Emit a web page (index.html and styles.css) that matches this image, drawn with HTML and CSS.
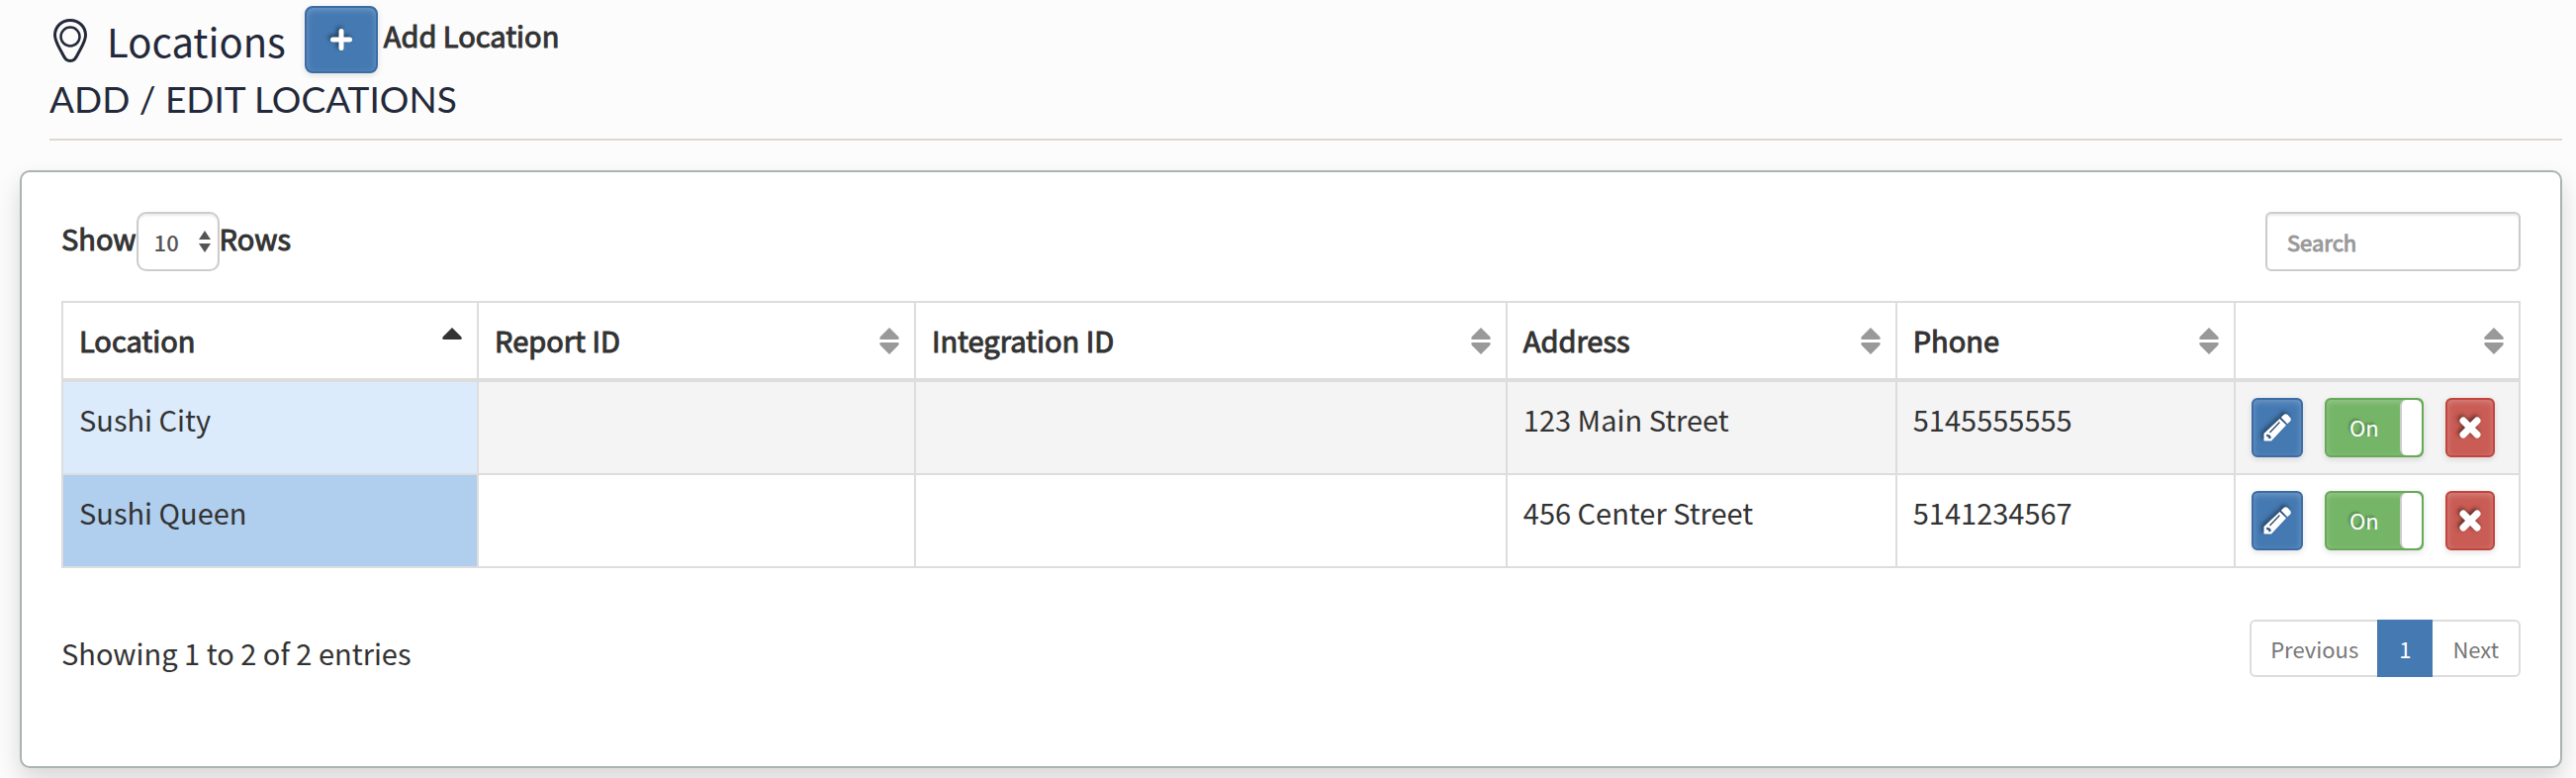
FILE: index.html
```
<!DOCTYPE html>
<html lang="en">
<head>
    <meta charset="UTF-8">
    <title>Locations</title>
    <link rel="stylesheet" href="styles.css">
</head>
<body>
    <svg class="sprite" width="0" height="0" aria-hidden="true">
        <symbol id="sort-up" viewBox="0 0 20 12">
            <path d="M10 0L19 9Q21 12 18 12H2Q-1 12 1 9Z"/>
        </symbol>
        <symbol id="sort-down" viewBox="0 0 20 12">
            <path d="M10 12L19 3Q21 0 18 0H2Q-1 0 1 3Z"/>
        </symbol>
        <symbol id="pencil" viewBox="0 0 28 28">
            <path fill-rule="evenodd" d="M16.500 5L23 11.500L8 27.500H0.500V20ZM3.500 20.500L3 23L5 23.500L5.500 25.500L8 24.500L7 22ZM16 8L6 18.500L6.900 19.400L16.900 8.900Z"/>
            <path d="M17.800 3.800L20.500 1Q22.500 -0.500 24.500 1L27.200 4Q28.500 6 27.200 7.500L24.300 10.300Z"/>
        </symbol>
        <symbol id="remove" viewBox="0 0 22 22">
            <path d="M4 4L18 18M18 4L4 18" fill="none" stroke="currentColor" stroke-width="7" stroke-linecap="round"/>
        </symbol>
    </svg>

    <header class="page-header">
        <div class="title-row">
            <svg class="pin" viewBox="0 0 34 44" fill="none" stroke="currentColor" aria-hidden="true">
                <path stroke-width="3" d="M17 1.500C8 1.500 1.500 8 1.500 16.500C1.500 23 6 29 9.500 36C12 41 13.500 42.500 17 42.500S22 41 24.500 36C28 29 32.500 23 32.500 16.500C32.500 8 26 1.500 17 1.500Z"/>
                <circle cx="17" cy="18" r="9.500" stroke-width="2.500"/>
            </svg>
            <h1>Locations</h1>
            <button type="button" class="btn btn-primary btn-add" id="add-location">
                <svg class="icon-plus" viewBox="0 0 22 22" aria-hidden="true">
                    <path d="M11 2.500V19.500M2.500 11H19.500" stroke="currentColor" stroke-width="5" stroke-linecap="round"/>
                </svg>
            </button>
            <label class="add-label" for="add-location">Add Location</label>
        </div>
        <h2>ADD / EDIT LOCATIONS</h2>
    </header>

    <main class="panel">
        <div class="toolbar">
            <div class="length">
                <label for="rows">Show</label>
                <div class="select-wrap">
                    <select id="rows">
                        <option>10</option>
                        <option>25</option>
                        <option>50</option>
                    </select>
                    <svg class="arrows" viewBox="0 0 12 22" aria-hidden="true">
                        <path d="M6 0L12 9H0ZM6 22L12 13H0Z"/>
                    </svg>
                </div>
                <label for="rows">Rows</label>
            </div>
            <input type="search" class="search" placeholder="Search" aria-label="Search">
        </div>

        <table>
            <colgroup>
                <col class="col-location">
                <col class="col-report">
                <col class="col-integration">
                <col class="col-address">
                <col class="col-phone">
                <col class="col-actions">
            </colgroup>
            <thead>
                <tr>
                    <th class="sorted"><div class="th-inner">Location <span class="sort"><svg><use href="#sort-up"/></svg></span></div></th>
                    <th><div class="th-inner">Report ID <span class="sort"><svg><use href="#sort-up"/></svg><svg><use href="#sort-down"/></svg></span></div></th>
                    <th><div class="th-inner">Integration ID <span class="sort"><svg><use href="#sort-up"/></svg><svg><use href="#sort-down"/></svg></span></div></th>
                    <th><div class="th-inner">Address <span class="sort"><svg><use href="#sort-up"/></svg><svg><use href="#sort-down"/></svg></span></div></th>
                    <th><div class="th-inner">Phone <span class="sort"><svg><use href="#sort-up"/></svg><svg><use href="#sort-down"/></svg></span></div></th>
                    <th><div class="th-inner"><span class="sort"><svg><use href="#sort-up"/></svg><svg><use href="#sort-down"/></svg></span></div></th>
                </tr>
            </thead>
            <tbody>
                <tr>
                    <td>Sushi City</td>
                    <td></td>
                    <td></td>
                    <td>123 Main Street</td>
                    <td>5145555555</td>
                    <td>
                        <div class="actions">
                            <button type="button" class="btn btn-primary btn-edit" aria-label="Edit"><svg class="icon-pencil"><use href="#pencil"/></svg></button>
                            <button type="button" class="btn toggle" aria-pressed="true"><span class="toggle-text">On</span><span class="knob"></span></button>
                            <button type="button" class="btn btn-danger" aria-label="Delete"><svg class="icon-remove"><use href="#remove"/></svg></button>
                        </div>
                    </td>
                </tr>
                <tr>
                    <td>Sushi Queen</td>
                    <td></td>
                    <td></td>
                    <td>456 Center Street</td>
                    <td>5141234567</td>
                    <td>
                        <div class="actions">
                            <button type="button" class="btn btn-primary btn-edit" aria-label="Edit"><svg class="icon-pencil"><use href="#pencil"/></svg></button>
                            <button type="button" class="btn toggle" aria-pressed="true"><span class="toggle-text">On</span><span class="knob"></span></button>
                            <button type="button" class="btn btn-danger" aria-label="Delete"><svg class="icon-remove"><use href="#remove"/></svg></button>
                        </div>
                    </td>
                </tr>
            </tbody>
        </table>

        <div class="table-footer">
            <div class="info">Showing 1 to 2 of 2 entries</div>
            <nav class="pagination">
                <a href="#">Previous</a>
                <a href="#" class="active">1</a>
                <a href="#">Next</a>
            </nav>
        </div>
    </main>
</body>
</html>
```
FILE: styles.css
```
* {
    box-sizing: border-box;
    margin: 0;
    padding: 0;
}
body {
    font-family: "Noto Sans CJK SC", "Noto Sans", sans-serif;
    font-size: 29px;
    line-height: 42px;
    color: #333;
    background-color: #fcfcfc;
    padding: 6px 14px 10px 20px;
}
button, input, select {
    font-family: inherit;
}
.sprite {
    position: absolute;
}

/* Header */
.page-header {
    margin-left: 30px;
    padding-bottom: 14px;
    border-bottom: 2px solid #ddd8cb;
    color: #23293a;
}
.title-row {
    display: flex;
    align-items: flex-start;
    height: 68px;
}
.pin {
    width: 34px;
    height: 44px;
    margin: 13px 0 0 4px;
}
h1 {
    font-size: 40px;
    font-weight: 400;
    line-height: 70px;
    margin: 0 19px 0 20px;
}
h2 {
    font-family: Lato, sans-serif;
    font-size: 37px;
    font-weight: 400;
    line-height: 52px;
}
/* regular weight thickened, keeps the regular widths */
.add-label, .length label, th {
    font-weight: 400;
    -webkit-text-stroke: 1px currentColor;
}
.add-label {
    margin: 8px 0 0 6px;
    color: #333;
}

/* Buttons */
.btn {
    display: flex;
    align-items: center;
    justify-content: center;
    height: 60px;
    border: 2px solid;
    border-radius: 6px;
    color: #fff;
    font-size: 22px;
    cursor: pointer;
    box-shadow: inset 0 2px 6px rgba(255, 255, 255, 0.25), 0 2px 6px rgba(0, 0, 0, 0.12);
}
.btn svg {
    fill: currentColor;
    filter: drop-shadow(-2px -2px 2px rgba(0, 0, 0, 0.5));
}
.btn-primary {
    background-color: #4479b2;
    border-color: #3c6ca5;
}
.btn-danger {
    width: 50px;
    background-color: #c95c54;
    border-color: #c1453e;
}
.btn-add {
    width: 74px;
    height: 68px;
    border-radius: 8px;
}
.btn-edit {
    width: 52px;
}
.icon-plus, .icon-remove {
    width: 22px;
    height: 22px;
}
.icon-pencil {
    width: 28px;
    height: 28px;
}
.toggle {
    width: 100px;
    background-color: #75b567;
    border-color: #66a958;
}
.toggle-text {
    flex: 1;
    padding-left: 2px;
    line-height: 54px;
    height: 56px;
    text-align: center;
    text-shadow: -2px -2px 2px rgba(0, 0, 0, 0.25);
}
.knob {
    width: 22px;
    height: 56px;
    background-color: #fff;
    border-left: 2px solid #ccc;
    border-radius: 6px;
}

/* Panel */
.panel {
    margin-top: 30px;
    padding: 40px;
    border: 2px solid #abb3b1;
    border-radius: 10px;
    background-color: #fff;
    box-shadow: 0 12px 24px rgba(0, 0, 0, 0.15);
}
.toolbar {
    display: flex;
    justify-content: space-between;
    margin-bottom: 30px;
}
.length {
    display: flex;
}
.length label {
    line-height: 52px;
}
.select-wrap {
    position: relative;
}
select {
    appearance: none;
    width: 84px;
    height: 60px;
    padding: 0 16px;
    border: 2px solid #ccc;
    border-radius: 10px;
    background-color: #fff;
    box-shadow: inset 0 2px 2px rgba(0, 0, 0, 0.08);
    color: #555;
    font-size: 22px;
    font-weight: 500;
}
.arrows {
    position: absolute;
    top: 19px;
    right: 9px;
    width: 12px;
    height: 22px;
    fill: #555;
    pointer-events: none;
}
.search {
    appearance: none;
    width: 258px;
    height: 60px;
    padding: 0 20px;
    border: 2px solid #ccc;
    border-radius: 6px;
    background-color: #fff;
    box-shadow: inset 0 2px 2px rgba(0, 0, 0, 0.08);
    font-size: 22px;
    -webkit-text-stroke: 1px currentColor;
}
.search::placeholder {
    color: #999;
}

/* Table */
table {
    width: 100%;
    table-layout: fixed;
    border-collapse: separate;
    border-spacing: 0;
    border-top: 2px solid #ddd;
    border-left: 2px solid #ddd;
}
.col-location { width: 16.91%; }
.col-report { width: 17.79%; }
.col-integration { width: 24.07%; }
.col-address { width: 15.86%; }
.col-phone { width: 13.77%; }
.col-actions { width: 11.6%; }
th, td {
    padding: 16px;
    border-right: 2px solid #ddd;
    border-bottom: 2px solid #ddd;
    text-align: left;
    vertical-align: top;
}
th {
    padding-right: 15px;
    border-bottom-width: 4px;
}
.th-inner {
    display: flex;
    justify-content: space-between;
    height: 44px;
}
.sort {
    display: flex;
    flex-direction: column;
    gap: 3px;
    margin-left: auto;
    padding-top: 9px;
}
.sort svg {
    width: 20px;
    height: 12px;
    fill: #999;
}
.sorted .sort svg {
    fill: #333;
}
tbody tr:nth-child(odd) {
    background-color: #f4f4f4;
}
tbody tr:nth-child(odd) td:first-child {
    background-color: #dcebfc;
}
tbody tr:nth-child(even) td:first-child {
    background-color: #b0ceee;
}
.actions {
    display: flex;
    gap: 22px;
}

/* Footer */
.table-footer {
    display: flex;
    justify-content: space-between;
    padding: 52px 0 40px;
}
.info {
    line-height: 66px;
    height: 68px;
}
.pagination {
    display: flex;
    height: 58px;
    font-size: 22px;
    line-height: 54px;
}
.pagination a {
    padding: 0 20px;
    border: 2px solid #ddd;
    color: #777;
    text-decoration: none;
}
.pagination a:first-child {
    padding: 0 19px;
    border-right: 0;
    border-radius: 6px 0 0 6px;
}
.pagination a:last-child {
    border-left: 0;
    border-radius: 0 6px 6px 0;
}
.pagination .active {
    background-color: #4479b2;
    border-color: #4479b2;
    color: #fff;
}
```
